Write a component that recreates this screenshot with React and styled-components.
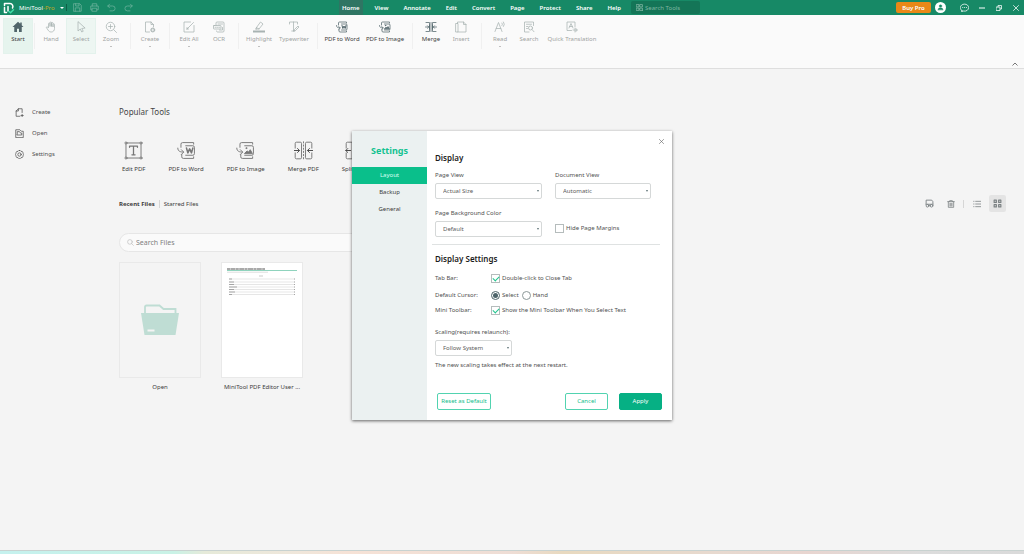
import * as React from 'react'
import styled, { createGlobalStyle } from 'styled-components'

const GlobalStyle = createGlobalStyle`
  * {
    box-sizing: border-box;
  }
  body {
    margin: 0;
    background: #f4f4f4;
    color: #505050;
    font-family: 'Noto Sans', 'Open Sans', sans-serif;
    font-size: 6px;
    line-height: 8px;
  }
  button,
  input,
  select {
    font: inherit;
    color: inherit;
    margin: 0;
  }
  button {
    display: inline-flex;
    align-items: center;
    justify-content: center;
    padding: 0;
    border: none;
    background: none;
    white-space: nowrap;
    cursor: pointer;
  }
  h1,
  h2,
  h3,
  p {
    margin: 0;
  }
`

const Icon = styled.svg.attrs({ viewBox: '0 0 24 24', 'aria-hidden': true })`
  display: block;
  flex: none;
  width: ${(p) => p.$size || 12}px;
  height: ${(p) => p.$size || 12}px;
  fill: none;
  stroke: currentColor;
  stroke-width: ${(p) => p.$stroke || 1.6};
  stroke-linecap: round;
  stroke-linejoin: round;
`

const Page = styled.div`
  display: flex;
  flex-flow: column nowrap;
  min-height: 100vh;
`

const AppWindow = styled.div`
  position: relative;
  flex: 1;
  display: flex;
  flex-flow: column nowrap;
`

const DesktopEdge = styled.div`
  height: 4px;
  border-top: 1px solid #c8d2d0;
  background: linear-gradient(
    90deg,
    #c5f1ee 0%,
    #c9f2e6 17%,
    #e6ead9 20%,
    #eee7db 28%,
    #f6e2d6 34%,
    #eeddd5 50%,
    #e8d9bf 55%,
    #e7d9cf 70%,
    #e8d5d0 79%,
    #dcdcdc 90%,
    #dadada 100%
  );
`

/* title bar */

const TitleBar = styled.header`
  display: flex;
  align-items: center;
  height: 15px;
  background: #178966;
  color: #fff;
`

const TitleLeft = styled.div`
  flex: 0 0 339px;
  display: flex;
  align-items: center;
  padding-left: 3px;
`

const Brand = styled.span`
  margin: 0 5px 0 4px;
  em {
    font-style: normal;
    color: #c4a81e;
  }
`

const Caret = styled.span`
  width: 0;
  height: 0;
  border: 2px solid transparent;
  border-bottom: 0;
  border-top-color: currentColor;
`

const BarRule = styled.span`
  width: 1px;
  height: 7px;
  margin: 0 6px 0 2px;
  background: #0d5f47;
`

const QuickButton = styled.button`
  width: 9px;
  margin-right: 8px;
  color: #6fb39d;
`

const MenuTabs = styled.nav`
  display: flex;
  gap: 9px;
  margin-right: 7px;
`

const MenuTab = styled.button`
  height: 15px;
  padding: 0 3px;
  font-weight: 600;
  background: ${(p) => (p.$active ? '#2f7563' : 'transparent')};
`

const ToolSearch = styled.label`
  display: flex;
  align-items: center;
  gap: 2px;
  width: 69px;
  height: 13px;
  padding: 0 5px;
  border-radius: 2px;
  background: #147557;
  color: #8fbfae;
  input {
    flex: 1;
    min-width: 0;
    padding: 0;
    border: none;
    outline: none;
    background: transparent;
  }
  input::placeholder {
    color: #7fb5a2;
    opacity: 1;
  }
`

const TitleRight = styled.div`
  display: flex;
  align-items: center;
  margin-left: auto;
  padding-right: 5px;
`

const BuyButton = styled.button`
  width: 35px;
  height: 11px;
  margin-right: 4px;
  border-radius: 2px;
  background: #ea8817;
  font-weight: 600;
`

const Avatar = styled.button`
  width: 11px;
  height: 11px;
  margin-right: 14px;
  border-radius: 50%;
  background: #fff;
  color: #178966;
`

const WindowButton = styled.button`
  width: ${(p) => p.$w || 7}px;
  margin-left: ${(p) => p.$gap || 0}px;
`

/* ribbon */

const Ribbon = styled.div`
  display: flex;
  align-items: flex-start;
  height: 54px;
  padding: 3px 6px 0 3px;
  border-bottom: 1px solid #dedede;
  background: #fafafa;
`

const RibbonRule = styled.span`
  width: 1px;
  height: 26px;
  margin: 5px ${(p) => p.$gap}px 0;
  background: #f0f0f0;
`

const RibbonButton = styled.button`
  flex: none;
  flex-flow: column nowrap;
  justify-content: flex-start;
  width: ${(p) => p.$w}px;
  height: 36px;
  padding-top: 2px;
  border: 1px solid ${(p) => (p.$tint ? '#e3f2ec' : 'transparent')};
  background: ${(p) => p.$tint || 'transparent'};
  color: ${(p) => (p.$on ? '#3c3c3c' : '#9fa3a2')};
  svg {
    color: ${(p) => (p.$on ? '#50646a' : '#a8b3b2')};
  }
  span {
    margin: 2px 0 3px;
  }
  i {
    border: 1px solid transparent;
    border-bottom: 0;
    border-top-color: #888;
  }
`

const Collapse = styled.button`
  align-self: flex-end;
  margin: 0 0 1px auto;
  color: #777;
`

/* start page */

const Body = styled.div`
  flex: 1;
  display: flex;
`

const SideNav = styled.nav`
  flex: 0 0 119px;
  display: flex;
  flex-flow: column nowrap;
  align-items: flex-start;
  gap: 11px;
  padding: 38px 0 0 15px;
`

const SideLink = styled.button`
  gap: 8px;
  height: 10px;
`

const Main = styled.main`
  flex: 1;
  min-width: 0;
  padding: 38px 18px 20px 0;
`

const SectionTitle = styled.h2`
  font-size: 8px;
  font-weight: 400;
  line-height: 10px;
  color: #444;
`

const ToolList = styled.div`
  display: flex;
  gap: 23px;
  padding: 24px 0 0 3px;
`

const PopularTool = styled.button`
  flex-flow: column nowrap;
  gap: 5px;
  color: #3c3c3c;
  svg {
    color: #777;
  }
`

const FilesHead = styled.div`
  display: flex;
  align-items: center;
  justify-content: space-between;
  height: 17px;
  margin-top: 22px;
`

const FileTabs = styled.div`
  display: flex;
  align-items: center;
  color: #3c3c3c;
`

const FileTab = styled.button`
  font-weight: ${(p) => (p.$active ? 700 : 400)};
`

const Rule = styled.span`
  width: 1px;
  height: 8px;
  margin: 0 ${(p) => p.$gap}px;
  background: #d6d6d6;
`

const ViewTools = styled.div`
  display: flex;
  align-items: center;
  color: #7b8183;
`

const ViewButton = styled.button`
  width: 17px;
  height: 17px;
  margin-left: ${(p) => p.$gap || 0}px;
  border-radius: 2px;
  background: ${(p) => (p.$active ? '#e4e4e4' : 'transparent')};
`

const FileSearch = styled.label`
  display: flex;
  align-items: center;
  gap: 2px;
  width: 300px;
  height: 19px;
  margin-top: 21px;
  padding: 0 7px;
  border: 1px solid #e6e6e6;
  border-radius: 10px;
  background: #fafafa;
  color: #b5b5b5;
  font-size: 7px;
  input {
    flex: 1;
    min-width: 0;
    padding: 0;
    border: none;
    outline: none;
    background: transparent;
  }
  input::placeholder {
    color: #808080;
    opacity: 1;
  }
`

const Files = styled.div`
  display: flex;
  gap: 20px;
  margin-top: 10px;
`

const FileCard = styled.button`
  flex-flow: column nowrap;
  gap: 5px;
  width: 82px;
  color: #3c3c3c;
`

const Thumb = styled.span`
  display: flex;
  flex-flow: column nowrap;
  align-items: stretch;
  justify-content: ${(p) => (p.$doc ? 'flex-start' : 'center')};
  width: 100%;
  height: 116px;
  padding: ${(p) => (p.$doc ? '4px 5px' : '0 20px')};
  border: 1px solid #e9e9e9;
  background: ${(p) => (p.$doc ? '#fff' : 'transparent')};
`

const Preview = styled.svg`
  display: block;
  width: 100%;
`

/* settings dialog */

const Overlay = styled.div`
  position: absolute;
  inset: 0;
  display: flex;
  align-items: center;
  justify-content: center;
`

const Dialog = styled.section`
  display: flex;
  width: 320px;
  height: 289px;
  background: #fff;
  box-shadow: 0 1px 3px rgba(0, 0, 0, 0.6);
`

const DialogNav = styled.nav`
  flex: 0 0 75px;
  display: flex;
  flex-flow: column nowrap;
  background: #ebf1f1;
  h1 {
    padding: 14px 0 10px;
    font-size: 9px;
    line-height: 12px;
    text-align: center;
    color: #12c290;
  }
`

const DialogTab = styled.button`
  height: 17px;
  background: ${(p) => (p.$active ? '#0abf8b' : 'transparent')};
  color: ${(p) => (p.$active ? '#d8fff2' : '#3c3c3c')};
`

const DialogBody = styled.form`
  flex: 1;
  display: flex;
  flex-flow: column nowrap;
  padding: 8px 8px 10px;
`

const Close = styled.button`
  align-self: flex-end;
  color: #666;
`

const Heading = styled.h2`
  font-size: 8px;
  font-weight: 600;
  line-height: 10px;
  color: #1c1c1c;
`

const FieldGrid = styled.div`
  display: grid;
  grid-template-columns: 107px 96px;
  column-gap: 13px;
  row-gap: 10px;
  align-items: end;
  margin-top: 8px;
`

const Field = styled.div`
  display: flex;
  flex-flow: column nowrap;
  align-items: flex-start;
  gap: 4px;
  margin-top: ${(p) => p.$top || 0}px;
`

const SelectBox = styled.span`
  position: relative;
  width: ${(p) => p.$w || '100%'};
  select {
    display: block;
    width: 100%;
    height: 16px;
    padding: 0 7px;
    appearance: none;
    border: 1px solid #d5d8d8;
    border-radius: 2px;
    background: #fff;
    color: #5c5c5c;
  }
  &::after {
    content: '';
    position: absolute;
    top: 7px;
    right: 3px;
    border: 1px solid transparent;
    border-top: 2px solid #5b7074;
    border-bottom: 0;
  }
`

const Check = styled.label`
  display: inline-flex;
  align-items: center;
  gap: 2px;
  height: 9px;
  margin-bottom: ${(p) => p.$bottom || 0}px;
  input {
    display: flex;
    align-items: center;
    justify-content: center;
    width: 9px;
    height: 9px;
    appearance: none;
    border: 1px solid #b5bcbc;
    background: #fff;
  }
  input:checked::after {
    content: '';
    width: 5px;
    height: 3px;
    margin-bottom: 1px;
    border: solid #22c58f;
    border-width: 0 0 1px 1px;
    transform: rotate(-45deg);
  }
  input[type='radio'] {
    border-color: #8c9999;
    border-radius: 50%;
  }
  input[type='radio']:checked {
    border-color: #4d6469;
  }
  input[type='radio']:checked::after {
    width: 5px;
    height: 5px;
    margin: 0;
    border: none;
    border-radius: 50%;
    background: #4d6469;
    transform: none;
  }
`

const Divider = styled.hr`
  width: 228px;
  margin: 7px 0 9px -3px;
  border: none;
  border-top: 1px solid #dfe2e2;
`

const OptionRow = styled.div`
  display: grid;
  grid-template-columns: 53px auto auto 1fr;
  column-gap: 3px;
  align-items: center;
  margin-top: ${(p) => p.$top}px;
`

const Note = styled.p`
  margin-top: 5px;
`

const Actions = styled.div`
  display: flex;
  gap: 11px;
  margin-top: auto;
  padding: 0 2px;
`

const Action = styled.button`
  width: ${(p) => p.$w || 43}px;
  height: 17px;
  margin-right: ${(p) => (p.$start ? 'auto' : '0')};
  border: 1px solid ${(p) => (p.$primary ? '#06b084' : '#52d3b0')};
  border-radius: 2px;
  background: ${(p) => (p.$primary ? '#06b084' : '#fff')};
  color: ${(p) => (p.$primary ? '#fff' : '#12bd8c')};
`

const icons = {
  home: (
    <path
      d="M12 1.5 1 12h3.5v10h5.500v-6.500h4V22h5.500V12H23L19.500 8.500V3h-3v2.700z"
      fill="currentColor"
      stroke="none"
    />
  ),
  hand: (
    <path d="M7 13V5.500a1.500 1.500 0 0 1 3 0V11V3.500a1.500 1.500 0 0 1 3 0V11V4.500a1.500 1.500 0 0 1 3 0V12V7a1.500 1.500 0 0 1 3 0v8c0 4-2.500 7-6.500 7-3.500 0-5-1.500-6.500-4L3 13.500c-.8-1.700 1-2.700 2.200-1.500z" />
  ),
  pointer: <path d="M6 2v18l4.500-4 3 6 3-1.500-3-5.500 6-.8z" />,
  zoom: (
    <>
      <circle cx="11" cy="11" r="8.500" />
      <path d="M17.500 17.500 23 23M11 7v8M7 11h8" />
    </>
  ),
  create: (
    <>
      <path d="M11 22H3V2h11l5 5v5M14 2v5h5" />
      <circle cx="17.500" cy="18" r="4" fill="currentColor" />
      <path d="M17.500 16v4M15.500 18h4" stroke="#fff" />
    </>
  ),
  edit: (
    <>
      <path d="M15 2H2v20h20V9" />
      <path d="M8 16 21 3M8 16v-3M8 16h3" />
    </>
  ),
  ocr: (
    <>
      <path d="M6 9V4q0-2 2-2h12q2 0 2 2v16q0 2-2 2H9q-2 0-2-2" />
      <rect x="1" y="9" width="15" height="7" rx="1" />
      <path d="M19 6H10M4 12.500h2M8 12.500h2M12 12.500h2M19 13v5h-6" />
    </>
  ),
  highlight: (
    <>
      <path d="m7 13 8-11 5 4-8 10H7zM7 13l5 3M5 16h2" />
      <path d="M0 21h24" strokeWidth="4" strokeLinecap="butt" />
    </>
  ),
  typewriter: (
    <path d="M3 6V2h16v4M11 2v18M7.500 20h6M13 17l7-7 2 2-7 7-3 1z" />
  ),
  toWord: (
    <>
      <path d="M5 8V4q0-2 2-2h14v2M6 17v3q0 2 2 2h13v-2" />
      <path d="M11 6h9q2 0 2 2v8q0 2-2 2h-9" />
      <path d="M1 9c0 4 3 5 7 5M5.500 11l3 3-3 3" />
      <path d="m12 9 1.700 6L16 10l2.300 5L20 9" strokeWidth="2" />
    </>
  ),
  toImage: (
    <>
      <path d="M5 8V4q0-2 2-2h14v2M6 17v3q0 2 2 2h13v-2" />
      <path d="M11 6h9q2 0 2 2v8q0 2-2 2h-9" />
      <path d="M1 9c0 4 3 5 7 5M5.500 11l3 3-3 3" />
      <path d="m11 15.500 3-3 2 1.500 2-3 2.500 4.500z" fill="currentColor" />
      <circle cx="13" cy="9" r=".6" fill="currentColor" />
    </>
  ),
  mergeSmall: (
    <>
      <path d="M2 3h7v18H2M22 3h-7v18h7M9 8v8M15 8v8M12 3v18" />
      <path d="M1 12h6M5 9.500 7.500 12 5 14.500M23 12h-6M19 9.500 16.500 12l2.500 2.500" />
    </>
  ),
  insert: (
    <>
      <path d="M5 5V2h12l5 5v15H6" />
      <path d="M17 2v5h5M2 5h4v17H2z" />
    </>
  ),
  read: (
    <path d="m2 21 7-18 7 18M4.500 15h9M16 4q2 2.500 0 5M19 2q3.500 4.500 0 9" />
  ),
  search: (
    <>
      <path d="M21 9V2H3v20h9M7 6.500h10M7 11h3M7 15h2" />
      <circle cx="15" cy="14" r="4" />
      <path d="m18 17 4 4.500" />
    </>
  ),
  translate: (
    <>
      <path d="M18 11V2H2v17h9" />
      <path d="m6 14 4-9 4 9M7.500 11h5M18 14v8M14 18h8M20 15l2.500 3-2.500 3" />
    </>
  ),
  save: (
    <>
      <path d="M2 2h16l4 4v16H2z" />
      <path d="M7 2v6h9V2M6 22v-9h12v9" />
    </>
  ),
  print: (
    <>
      <path d="M6 8V2h12v6M6 18H2V8h20v10h-4" />
      <path d="M6 14h12v8H6z" />
    </>
  ),
  undo: <path d="M7 3 2 8l5 5M2 8h13a6 6 0 0 1 0 13H8" />,
  redo: <path d="m17 3 5 5-5 5M22 8H9a6 6 0 0 0 0 13h7" />,
  apps: (
    <path d="M2 2h8v8H2zM14 2h8v8h-8zM2 14h8v8H2zM14 14h8v8h-8zM22 22l1 1" />
  ),
  user: (
    <>
      <circle cx="12" cy="7" r="4.500" fill="currentColor" />
      <path d="M3 20c0-9 18-9 18 0z" fill="currentColor" />
    </>
  ),
  chat: (
    <path d="M5 20.500 4 23l5-1.500c8 1.500 14-3 14-9.500 0-5-5-9-11-9S1 7 1 12c0 3.500 1.500 6.500 4 8.500zM7 12h.5M12 12h.5M17 12h.5" />
  ),
  minimize: <path d="M1 12h22" />,
  restore: <path d="M2 8h14v14H2zM8 8V2h14v14h-6" />,
  close: <path d="M2 2l20 20M22 2 2 22" />,
  up: <path d="m3 17 9-9 9 9" />,
  sideCreate: (
    <>
      <path d="M19 12V2H9L3 8v14h10M9 2v6H3" />
      <path d="M19 17v6M16 20h6" />
    </>
  ),
  sideOpen: (
    <>
      <path d="M2 22V2h11l4 4h5v16z" />
      <path d="M6 12V7h6l3 4h3v5H6z" />
    </>
  ),
  gear: (
    <>
      <path d="M12 1q3 0 4 2.500l3.500.5q2 1.500 1.500 4.500 2 1.500 2 3.500t-2 3.500q.5 3-1.500 4.500l-3.500.5Q15 23 12 23t-4-2.500L4.500 20Q2.500 18.500 3 15.500 1 14 1 12t2-3.500Q2.500 5.500 4.500 4L8 3.500Q9 1 12 1z" />
      <circle cx="12" cy="12" r="4.500" />
    </>
  ),
  editPdf: (
    <>
      <path d="M4 2.500h16M4 21.500h16M2.500 4v16M21.500 4v16" />
      <path d="M7 8V6.500h10V8M12 6.500v11M10 17.500h4" strokeWidth="1.600" />
      <circle cx="2.500" cy="2.500" r="1.300" />
      <circle cx="21.500" cy="2.500" r="1.300" />
      <circle cx="2.500" cy="21.500" r="1.300" />
      <circle cx="21.500" cy="21.500" r="1.300" />
    </>
  ),
  mergePdf: (
    <>
      <path d="M1.500 9V3q0-1.500 1.500-1.500h5q1.500 0 1.500 1.500v18q0 1.500-1.500 1.500H3q-1.500 0-1.500-1.500v-6M22.500 9V3q0-1.500-1.500-1.500h-5q-1.500 0-1.500 1.500v18q0 1.500 1.500 1.500h5q1.500 0 1.500-1.500v-6" />
      <path d="M12 1v22" strokeDasharray="1.500 2.500" />
      <path
        d="M.5 12h6M4.500 9.500 7 12l-2.500 2.500M23.500 12h-6M19.500 9.500 17 12l2.500 2.500"
        stroke="#444"
      />
    </>
  ),
  splitPdf: (
    <>
      <path d="M1.500 9V3q0-1.500 1.500-1.500h6v21H3q-1.500 0-1.500-1.500v-6M22.500 9V3q0-1.500-1.500-1.500h-6v21h6q1.500 0 1.500-1.500v-6" />
      <path
        d="M1 12h6M3.500 9.500 1 12l2.500 2.500M23 12h-6M20.500 9.500 23 12l-2.500 2.500"
        stroke="#444"
      />
    </>
  ),
  clean: (
    <>
      <path d="M3 12V3h15l3 4v5M2 14h20" />
      <circle cx="6.500" cy="18" r="3.500" />
      <circle cx="17.500" cy="18" r="3.500" />
      <path d="M10 18h4" />
    </>
  ),
  trash: <path d="M2 5h20M8 5V2h8v3M4 5v17h16V5M9 10v8M12 10v8M15 10v8" />,
  list: <path d="M8 4h15M8 12h15M8 20h15M2 4h1M2 12h1M2 20h1" />,
  grid: <path d="M3 3h6v6H3zM15 3h6v6h-6zM3 15h6v6H3zM15 15h6v6h-6z" />,
}

const menuTabs = [
  'Home',
  'View',
  'Annotate',
  'Edit',
  'Convert',
  'Page',
  'Protect',
  'Share',
  'Help',
]

const ribbonGroups = [
  [{ label: 'Start', icon: 'home', w: 30, on: true, tint: '#e6f4ee' }],
  [
    { label: 'Hand', icon: 'hand', w: 30 },
    { label: 'Select', icon: 'pointer', w: 30, tint: '#edf6f2' },
    { label: 'Zoom', icon: 'zoom', w: 30, more: true },
  ],
  [{ label: 'Create', icon: 'create', w: 30, more: true }],
  [
    { label: 'Edit All', icon: 'edit', w: 30, more: true },
    { label: 'OCR', icon: 'ocr', w: 30 },
  ],
  [
    { label: 'Highlight', icon: 'highlight', w: 32, more: true },
    { label: 'Typewriter', icon: 'typewriter', w: 38 },
  ],
  [
    { label: 'PDF to Word', icon: 'toWord', w: 40, on: true },
    { label: 'PDF to Image', icon: 'toImage', w: 46, on: true },
  ],
  [
    { label: 'Merge', icon: 'mergeSmall', w: 28, on: true },
    { label: 'Insert', icon: 'insert', w: 32 },
  ],
  [
    { label: 'Read', icon: 'read', w: 28, more: true },
    { label: 'Search', icon: 'search', w: 30 },
    { label: 'Quick Translation', icon: 'translate', w: 56 },
  ],
]

const popularTools = [
  { label: 'Edit PDF', icon: 'editPdf' },
  { label: 'PDF to Word', icon: 'toWord' },
  { label: 'PDF to Image', icon: 'toImage' },
  { label: 'Merge PDF', icon: 'mergePdf' },
  { label: 'Split PDF', icon: 'splitPdf' },
]

function Select({ id, value, w }) {
  return (
    <SelectBox $w={w}>
      <select id={id} defaultValue={value}>
        <option>{value}</option>
      </select>
    </SelectBox>
  )
}

function TopBar() {
  return (
    <TitleBar>
      <TitleLeft>
        <Icon $size={12} $stroke={3}>
          <path d="M3 7V3h11a6 6 0 0 1 5 9M3 11v10h4M10 9v9" />
          <path d="m12 19 3 2.500 6-6" stroke="#3fe0a8" />
        </Icon>
        <Brand>
          MiniTool<em>-Pro</em>
        </Brand>
        <Caret />
        <BarRule />
        {['save', 'print', 'undo', 'redo'].map((name) => (
          <QuickButton key={name} type="button" aria-label={name}>
            <Icon $size={9} $stroke={2}>
              {icons[name]}
            </Icon>
          </QuickButton>
        ))}
      </TitleLeft>
      <MenuTabs>
        {menuTabs.map((tab) => (
          <MenuTab key={tab} type="button" $active={tab === 'Home'}>
            {tab}
          </MenuTab>
        ))}
      </MenuTabs>
      <ToolSearch>
        <Icon $size={7} $stroke={2.4}>
          {icons.apps}
        </Icon>
        <input type="text" placeholder="Search Tools" aria-label="Search Tools" />
      </ToolSearch>
      <TitleRight>
        <BuyButton type="button">Buy Pro</BuyButton>
        <Avatar type="button" aria-label="Account">
          <Icon $size={7} $stroke={1}>
            {icons.user}
          </Icon>
        </Avatar>
        <WindowButton type="button" aria-label="Feedback" $w={9}>
          <Icon $size={9} $stroke={2}>
            {icons.chat}
          </Icon>
        </WindowButton>
        <WindowButton type="button" aria-label="Minimize" $gap={9}>
          <Icon $size={6} $stroke={4}>
            {icons.minimize}
          </Icon>
        </WindowButton>
        <WindowButton type="button" aria-label="Restore" $gap={10}>
          <Icon $size={6} $stroke={3}>
            {icons.restore}
          </Icon>
        </WindowButton>
        <WindowButton type="button" aria-label="Close" $gap={10}>
          <Icon $size={6} $stroke={3}>
            {icons.close}
          </Icon>
        </WindowButton>
      </TitleRight>
    </TitleBar>
  )
}

function RibbonBar() {
  return (
    <Ribbon>
      {ribbonGroups.map((group, i) => (
        <React.Fragment key={group[0].label}>
          {i > 0 && <RibbonRule $gap={i === 1 ? 1 : 4} />}
          {group.map((tool) => (
            <RibbonButton
              key={tool.label}
              type="button"
              $w={tool.w}
              $on={tool.on}
              $tint={tool.tint}
            >
              <Icon $size={12} $stroke={1.5}>
                {icons[tool.icon]}
              </Icon>
              <span>{tool.label}</span>
              {tool.more && <i />}
            </RibbonButton>
          ))}
        </React.Fragment>
      ))}
      <Collapse type="button" aria-label="Collapse ribbon">
        <Icon $size={6} $stroke={4}>
          {icons.up}
        </Icon>
      </Collapse>
    </Ribbon>
  )
}

function StartPage() {
  return (
    <Body>
      <SideNav>
        <SideLink type="button">
          <Icon $size={9} $stroke={2}>
            {icons.sideCreate}
          </Icon>
          Create
        </SideLink>
        <SideLink type="button">
          <Icon $size={9} $stroke={2}>
            {icons.sideOpen}
          </Icon>
          Open
        </SideLink>
        <SideLink type="button">
          <Icon $size={9} $stroke={2}>
            {icons.gear}
          </Icon>
          Settings
        </SideLink>
      </SideNav>
      <Main>
        <SectionTitle>Popular Tools</SectionTitle>
        <ToolList>
          {popularTools.map((tool) => (
            <PopularTool key={tool.label} type="button">
              <Icon $size={19} $stroke={1.2}>
                {icons[tool.icon]}
              </Icon>
              {tool.label}
            </PopularTool>
          ))}
        </ToolList>
        <FilesHead>
          <FileTabs>
            <FileTab type="button" $active>
              Recent Files
            </FileTab>
            <Rule $gap={4} />
            <FileTab type="button">Starred Files</FileTab>
          </FileTabs>
          <ViewTools>
            <ViewButton type="button" aria-label="Clean list">
              <Icon $size={9} $stroke={2.4}>
                {icons.clean}
              </Icon>
            </ViewButton>
            <ViewButton type="button" aria-label="Delete" $gap={4}>
              <Icon $size={8} $stroke={2.4}>
                {icons.trash}
              </Icon>
            </ViewButton>
            <Rule $gap={4} />
            <ViewButton type="button" aria-label="List view">
              <Icon $size={8} $stroke={2.4}>
                {icons.list}
              </Icon>
            </ViewButton>
            <ViewButton type="button" aria-label="Grid view" $gap={4} $active>
              <Icon $size={9} $stroke={3}>
                {icons.grid}
              </Icon>
            </ViewButton>
          </ViewTools>
        </FilesHead>
        <FileSearch>
          <Icon $size={7} $stroke={2}>
            <circle cx="10" cy="10" r="8" />
            <path d="m16 16 6 6" />
          </Icon>
          <input type="text" placeholder="Search Files" aria-label="Search Files" />
        </FileSearch>
        <Files>
          <FileCard type="button">
            <Thumb>
              <Preview viewBox="0 0 40 32" aria-hidden="true">
                <path
                  d="M5 9V3q0-1.500 1.500-1.500h13l4 3.500h12V9"
                  fill="none"
                  stroke="#bfddd4"
                  strokeWidth="1.800"
                />
                <path d="M1 9h38l-3.500 22h-31z" fill="#bfddd4" />
                <path d="M7.500 26.500h7" stroke="#f4f4f4" strokeWidth="2" />
              </Preview>
            </Thumb>
            Open
          </FileCard>
          <FileCard type="button">
            <Thumb $doc>
              <Preview viewBox="0 0 70 30" aria-hidden="true">
                <path d="M0 2h38" stroke="#555" strokeWidth="1.200" strokeDasharray="3 .4 5 .4" />
                <path d="M0 3.500h70" stroke="#8fd3bd" strokeWidth="1" />
                <path d="M0 5.200h41" stroke="#bbb" strokeWidth=".5" />
                <path d="M32 9h4" stroke="#aaa" strokeWidth=".6" />
                <path
                  d="M2 12h66M2 15h66M2 17.500h66M2 20h66M2 22.500h66M2 25h66M2 27.500h66"
                  stroke="#ccc"
                  strokeWidth=".5"
                />
                <path
                  d="M2 12h3M2 15h5M2 17.500h5M2 20h8M2 22.500h5M2 25h6M2 27.500h3M67 12h1M67 15h1M67 17.500h1M67 20h1M67 22.500h1M67 25h1M67 27.500h1"
                  stroke="#888"
                  strokeWidth=".7"
                />
              </Preview>
            </Thumb>
            MiniTool PDF Editor User ...
          </FileCard>
        </Files>
      </Main>
    </Body>
  )
}

function SettingsDialog() {
  return (
    <Overlay>
      <Dialog role="dialog" aria-label="Settings">
        <DialogNav>
          <h1>Settings</h1>
          <DialogTab type="button" $active>
            Layout
          </DialogTab>
          <DialogTab type="button">Backup</DialogTab>
          <DialogTab type="button">General</DialogTab>
        </DialogNav>
        <DialogBody onSubmit={(e) => e.preventDefault()}>
          <Close type="button" aria-label="Close settings">
            <Icon $size={5} $stroke={3}>
              {icons.close}
            </Icon>
          </Close>
          <Field $top={9}>
            <Heading>Display</Heading>
          </Field>
          <FieldGrid>
            <Field>
              <label htmlFor="page-view">Page View</label>
              <Select id="page-view" value="Actual Size" />
            </Field>
            <Field>
              <label htmlFor="document-view">Document View</label>
              <Select id="document-view" value="Automatic" />
            </Field>
            <Field>
              <label htmlFor="page-color">Page Background Color</label>
              <Select id="page-color" value="Default" />
            </Field>
            <Check $bottom={4}>
              <input type="checkbox" />
              Hide Page Margins
            </Check>
          </FieldGrid>
          <Divider />
          <Heading>Display Settings</Heading>
          <OptionRow $top={10}>
            <span>Tab Bar:</span>
            <Check>
              <input type="checkbox" defaultChecked />
              Double-click to Close Tab
            </Check>
          </OptionRow>
          <OptionRow $top={8}>
            <span>Default Cursor:</span>
            <Check>
              <input type="radio" name="cursor" defaultChecked />
              Select
            </Check>
            <Check>
              <input type="radio" name="cursor" />
              Hand
            </Check>
          </OptionRow>
          <OptionRow $top={6}>
            <span>Mini Toolbar:</span>
            <Check>
              <input type="checkbox" defaultChecked />
              Show the Mini Toolbar When You Select Text
            </Check>
          </OptionRow>
          <Field $top={13}>
            <label htmlFor="scaling">Scaling(requires relaunch):</label>
            <Select id="scaling" value="Follow System" w="77px" />
          </Field>
          <Note>The new scaling takes effect at the next restart.</Note>
          <Actions>
            <Action type="button" $w={54} $start>
              Reset as Default
            </Action>
            <Action type="button">Cancel</Action>
            <Action type="submit" $primary>
              Apply
            </Action>
          </Actions>
        </DialogBody>
      </Dialog>
    </Overlay>
  )
}

export default function App() {
  return (
    <Page>
      <GlobalStyle />
      <AppWindow>
        <TopBar />
        <RibbonBar />
        <StartPage />
        <SettingsDialog />
      </AppWindow>
      <DesktopEdge />
    </Page>
  )
}
